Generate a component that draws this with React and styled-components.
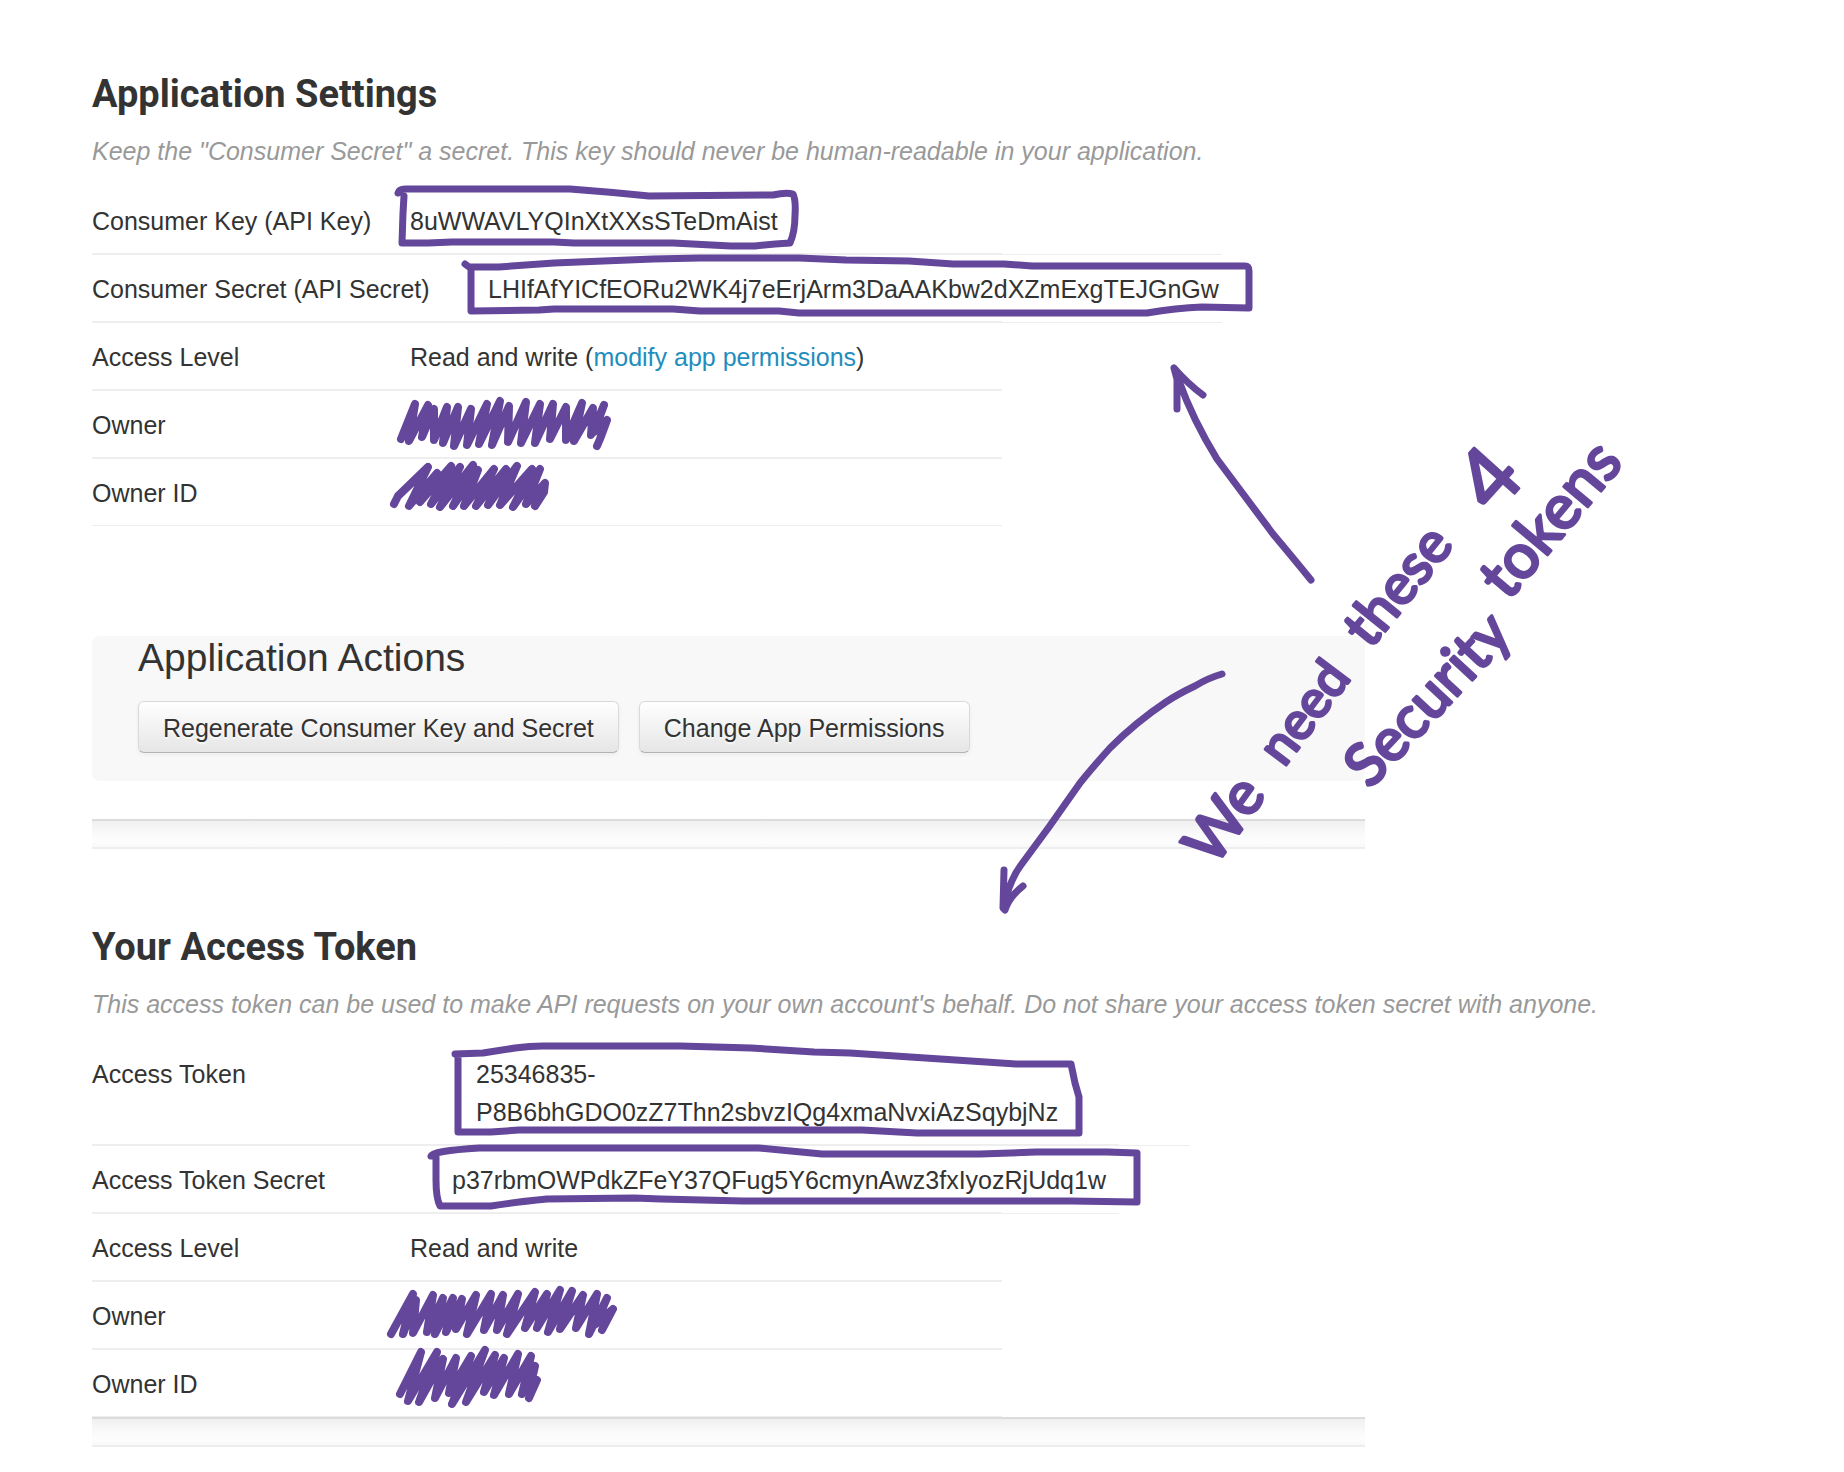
import React from 'react';
import styled, { createGlobalStyle } from 'styled-components';

const ink = '#64469b';

const GlobalStyle = createGlobalStyle`
    *, *::before, *::after {
        box-sizing: border-box;
    }
    body {
        margin: 0;
        background: #fff;
        color: #333;
        font-family: 'Liberation Sans', Arial, sans-serif;
        font-size: 25px;
        line-height: 38px;
    }
`;

// Elements
const Page = styled.main`
    position: relative;
    padding: 70px 92px 26px;
`;

const Content = styled.div`
    max-width: 1273px;
`;

const Section = styled.section`
    margin-top: ${props => (props.$spaced ? '74px' : '0')};
`;

const Title = styled.h2`
    margin: 0;
    font-family: 'Roboto', sans-serif;
    font-size: 38px;
    font-weight: 700;
    line-height: 48px;
`;

const Hint = styled.p`
    margin: 14px 0 17px;
    color: #999;
    font-style: italic;
    white-space: nowrap;
`;

const Settings = styled.table`
    display: block;
    border-collapse: collapse;

    tbody {
        display: block;
    }
`;

const Row = styled.tr`
    display: flex;
    width: ${props => props.$width || 910}px;

    &:last-child > * {
        border-bottom-width: 1px;
    }
`;

const Label = styled.th`
    flex: 0 0 ${props => props.$width || 318}px;
    padding: 15px 0 13px;
    border-bottom: 2px solid #eee;
    font-weight: 400;
    text-align: left;
    white-space: nowrap;
`;

const Value = styled.td`
    flex: 1 1 0;
    min-width: 0;
    padding: 15px 0 13px;
    border-bottom: 2px solid #eee;
    white-space: nowrap;
`;

const Tail = styled.td`
    flex: 0 0 ${props => props.$width}px;
    margin-right: -${props => props.$width}px;
    padding: 0;
    border-bottom: 1px solid #eee;
`;

const Link = styled.a`
    color: #1f8dbd;
    text-decoration: none;
`;

const Actions = styled.section`
    margin-top: 110px;
    padding: 0 46px 28px;
    border-radius: 8px;
    background: #f8f8f8;
`;

const ActionsTitle = styled.h3`
    margin: 0 0 22px;
    font-size: 39px;
    font-weight: 400;
    line-height: 43px;
`;

const Buttons = styled.div`
    display: flex;
    flex-wrap: wrap;
    gap: 20px;
`;

const Button = styled.button`
    padding: 7px 24px 5px;
    border: 1px solid #d9d9d9;
    border-bottom-color: #b3b3b3;
    border-radius: 6px;
    background: linear-gradient(#fff, #e6e6e6);
    box-shadow: inset 0 1px 0 #fff, 0 2px 4px rgba(0, 0, 0, 0.05);
    color: #333;
    font: inherit;
    text-shadow: 0 2px 2px rgba(255, 255, 255, 0.75);
    cursor: pointer;
`;

const Divider = styled.div`
    height: 30px;
    margin-top: ${props => (props.$spaced ? '38px' : '0')};
    border-top: 2px solid #dcdcdc;
    border-bottom: 2px solid #eee;
    background: linear-gradient(#f0f0f0, #fafafa 50%, #fdfdfd 80%, #f9f9f9);
`;

const Ink = styled.svg`
    position: absolute;
    top: 0;
    left: 0;
    overflow: visible;
    pointer-events: none;
    fill: none;
    stroke: ${ink};
    stroke-width: 7px;
    stroke-linecap: round;
    stroke-linejoin: round;
`;

const Scribbles = styled.g`
    stroke-width: 8px;
`;

const Note = styled.text`
    fill: ${ink};
    stroke-width: 3px;
    font-family: 'Lato', sans-serif;
    font-size: ${props => props.$size}px;
`;

const frames = [
    'M398 193Q399 189 405 189L570 189Q610 192 649 196L773 195Q786 192 793 194Q796 200 795 215Q795 232 790 243Q770 244 755 246L731 246L673 243L574 243L554 242L452 242L428 243L402 243L403 213L404 196',
    'M465 264L469 267L499 267L554 263L653 259L700 258L799 258L846 260L909 261L953 264L1004 264L1032 266L1245 266Q1249 266 1249 271L1249 308L1202 307Q1176 308 1147 313L799 313L779 311L700 311L673 309L554 309L539 310L471 311L471 270',
    'M455 1054L483 1053L515 1048Q530 1046 543 1046L680 1046L751 1048L814 1052L850 1053L1016 1064L1071 1064L1075 1083L1079 1097L1079 1133L917 1133L862 1130L519 1130L491 1132L458 1132L458 1057',
    'M431 1156Q432 1151 479 1148L727 1148L759 1148L822 1154L980 1154L1036 1152L1107 1152L1137 1153L1137 1202L1071 1201L743 1201L661 1199L634 1198L547 1199Q515 1202 491 1206L440 1206Q436 1198 436 1180L436 1157',
];

const arrows = [
    'M1311 580Q1294 559 1273 534L1217 459Q1193 420 1179 381L1174 368M1177 409L1177 379L1174 368Q1188 384 1203 395',
    'M1222 674Q1208 678 1195 686Q1178 694 1166 702Q1136 722 1110 748Q1092 768 1080 783L1049 827L1021 865Q1011 878 1004 904M1004 870L1003 908L1005 910Q1009 897 1023 886',
];

const scribbles = [
    '401,437 415,402 409,439 428,403 422,435 434,407 434,438 447,405 443,441 458,405 454,444 471,407 467,443 487,402 479,442 500,399 492,443 509,404 508,440 526,400 521,441 540,402 535,441 553,402 550,437 566,405 566,438 582,401 574,439 593,406 591,433 604,403 594,430 607,418 600,437 597,444',
    '394,502 398,494 428,465 409,504 437,471 420,500 451,464 431,502 460,465 440,505 473,463 453,504 478,468 464,504 494,467 476,504 506,467 488,503 517,464 500,503 532,467 513,505 540,467 526,502 545,481 544,490 535,504',
    '391,1332 413,1292 403,1332 416,1298 413,1331 433,1293 427,1330 443,1296 435,1332 453,1296 446,1330 462,1297 456,1327 476,1293 467,1332 491,1292 484,1328 503,1293 497,1328 518,1292 507,1332 535,1290 525,1326 547,1292 537,1326 560,1288 548,1330 572,1289 560,1327 583,1293 576,1326 597,1292 589,1332 607,1296 596,1322 613,1307 602,1328',
    '400,1392 421,1350 408,1399 437,1350 419,1400 443,1357 435,1396 456,1356 449,1391 471,1354 452,1402 485,1348 466,1400 495,1353 484,1390 504,1356 494,1393 518,1352 509,1392 531,1354 522,1392 535,1364 529,1390 537,1378 529,1396',
];

const notes = [
    { text: 'We', x: 1214, y: 868, size: 60, angle: -54 },
    { text: 'need', x: 1284, y: 768, size: 52, angle: -53 },
    { text: 'these', x: 1370, y: 650, size: 56, angle: -51 },
    { text: '4', x: 1494, y: 516, size: 84, angle: -48 },
    { text: 'Security', x: 1370, y: 790, size: 59, angle: -47 },
    { text: 'tokens', x: 1508, y: 602, size: 62, angle: -50 },
];

const Annotations = () => (
    <Ink width="1844" height="1472" viewBox="0 0 1844 1472">
        {frames.map(d => (
            <path key={d} d={d} />
        ))}
        {arrows.map(d => (
            <path key={d} d={d} />
        ))}
        <Scribbles transform="translate(0 2)">
            {scribbles.map(points => (
                <polyline key={points} points={points} />
            ))}
        </Scribbles>
        {notes.map(({ text, x, y, size, angle }) => (
            <Note
                key={text}
                $size={size}
                transform={`translate(${x} ${y}) rotate(${angle})`}
            >
                {text}
            </Note>
        ))}
    </Ink>
);

const Setting = ({ label, labelWidth, width, tail, children }) => (
    <Row $width={width}>
        <Label scope="row" $width={labelWidth}>
            {label}
        </Label>
        <Value>{children}</Value>
        {tail && <Tail $width={tail} />}
    </Row>
);

const App = () => (
    <>
        <GlobalStyle />
        <Page>
            <Content>
                <Section>
                    <Title>Application Settings</Title>
                    <Hint>
                        Keep the "Consumer Secret" a secret. This key should
                        never be human-readable in your application.
                    </Hint>
                    <Settings>
                        <tbody>
                            <Setting label="Consumer Key (API Key)" tail={220}>
                                8uWWAVLYQInXtXXsSTeDmAist
                            </Setting>
                            <Setting
                                label="Consumer Secret (API Secret)"
                                labelWidth={396}
                                tail={220}
                            >
                                LHIfAfYICfEORu2WK4j7eErjArm3DaAAKbw2dXZmExgTEJGnGw
                            </Setting>
                            <Setting label="Access Level">
                                Read and write (
                                <Link href="#permissions">
                                    modify app permissions
                                </Link>
                                )
                            </Setting>
                            <Setting label="Owner" />
                            <Setting label="Owner ID" />
                        </tbody>
                    </Settings>
                </Section>
                <Actions>
                    <ActionsTitle>Application Actions</ActionsTitle>
                    <Buttons>
                        <Button type="button">
                            Regenerate Consumer Key and Secret
                        </Button>
                        <Button type="button">Change App Permissions</Button>
                    </Buttons>
                </Actions>
                <Divider $spaced />
                <Section $spaced>
                    <Title>Your Access Token</Title>
                    <Hint>
                        This access token can be used to make API requests on
                        your own account's behalf. Do not share your access
                        token secret with anyone.
                    </Hint>
                    <Settings>
                        <tbody>
                            <Setting
                                label="Access Token"
                                labelWidth={384}
                                width={1027}
                                tail={71}
                            >
                                25346835-
                                <br />
                                P8B6bhGDO0zZ7Thn2sbvzIQg4xmaNvxiAzSqybjNz
                            </Setting>
                            <Setting
                                label="Access Token Secret"
                                labelWidth={360}
                                tail={117}
                            >
                                p37rbmOWPdkZFeY37QFug5Y6cmynAwz3fxIyozRjUdq1w
                            </Setting>
                            <Setting label="Access Level">
                                Read and write
                            </Setting>
                            <Setting label="Owner" />
                            <Setting label="Owner ID" />
                        </tbody>
                    </Settings>
                </Section>
                <Divider />
            </Content>
            <Annotations />
        </Page>
    </>
);

export default App;
